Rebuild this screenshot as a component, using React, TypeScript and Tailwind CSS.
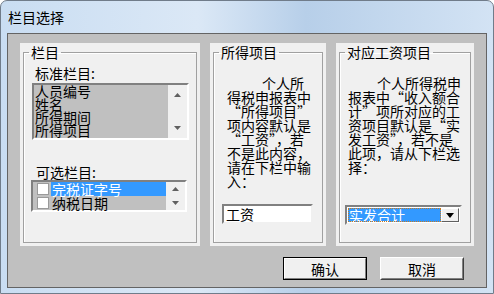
import React from 'react';

function Arrow({ dir }: { dir: 'up' | 'down' }) {
  return (
    <svg width="7" height="4" viewBox="0 0 7 4">
      {dir === 'up' ? <path d="M0 4 L3.5 0 L7 4 Z" fill="#606060" /> : <path d="M0 0 L3.5 4 L7 0 Z" fill="#606060" />}
    </svg>
  );
}

function Group({ title, width, children }: { title: string; width: string; children: React.ReactNode }) {
  return (
    <div className={`${width} h-[203px] bg-[#f0f0f0] px-[3px] pt-[2px] pb-[3px]`}>
      <fieldset className="h-[198px] border border-[#a0a0a0] shadow-[inset_1px_1px_0_#ffffff]">
        <legend className="ml-[5px] px-[2px] text-[14px] leading-[14px]">{title}</legend>
        {children}
      </fieldset>
    </div>
  );
}

const midLines = ['个人所', '得税申报表中', '“所得项目”', '项内容默认是', '“工资”，若', '不是此内容，', '请在下栏中输', '入：'];
const rightLines = ['个人所得税申', '报表中“收入额合', '计”项所对应的工', '资项目默认是“实', '发工资”，若不是', '此项，请从下栏选', '择：'];

export default function App() {
  return (
    <div className="w-[494px] h-[294px] rounded-t-[7px] border border-[#707c8a] bg-[linear-gradient(90deg,#c9ddf2_0%,#dbe8f6_40%,#b7cfe9_62%,#d3e3f4_100%)] font-['Noto_Sans_CJK_SC',sans-serif] text-black overflow-hidden">
      {/* Title bar */}
      <div className="h-[32px] flex items-center pl-[7px] text-[14px] leading-[14px]">栏目选择</div>

      {/* Client area */}
      <div className="ml-[6px] w-[480px] h-[255px] border border-[#646464] bg-[#c0c0c0] pt-[9px] px-[12px]">
        <div className="flex gap-[10px]">
          <Group title="栏目" width="w-[180px]">
            <div className="ml-[11px] mt-[7px] text-[14px] leading-[14px]">标准栏目:</div>
            <div className="ml-[8px] mt-[3px] w-[157px] h-[57px] border-2 border-t-[#808080] border-l-[#808080] border-r-[#ffffff] border-b-[#ffffff] flex bg-[#c0c0c0]">
              <div className="flex-1 pl-[1px] text-[14px] leading-[13px] overflow-hidden whitespace-nowrap">
                <div>人员编号</div>
                <div>姓名</div>
                <div>所得期间</div>
                <div>所得项目</div>
              </div>
              <div className="w-[19px] bg-[#f0f0f0] flex flex-col items-center justify-between py-[8px]">
                <Arrow dir="up" />
                <Arrow dir="down" />
              </div>
            </div>

            <div className="ml-[12px] mt-[25px] text-[14px] leading-[14px]">可选栏目:</div>
            <div className="ml-[7px] mt-[1px] w-[156px] h-[32px] border-2 border-t-[#808080] border-l-[#808080] border-r-[#ffffff] border-b-[#ffffff] flex bg-[#c0c0c0]">
              <div className="flex-1 text-[14px] leading-[14px] whitespace-nowrap">
                <div className="flex items-center h-[14px]">
                  <div className="ml-[4px] w-[12px] h-[12px] bg-white border border-[#9a9a9a]" />
                  <div className="ml-[2px] flex-1 h-[14px] bg-[#3399ff] text-white pl-[1px]">完税证字号</div>
                </div>
                <div className="flex items-center h-[14px]">
                  <div className="ml-[4px] w-[12px] h-[12px] bg-white border border-[#9a9a9a]" />
                  <div className="ml-[2px] pl-[1px]">纳税日期</div>
                </div>
              </div>
              <div className="w-[19px] bg-[#f0f0f0] flex flex-col items-center justify-between py-[5px]">
                <Arrow dir="up" />
                <Arrow dir="down" />
              </div>
            </div>
          </Group>

          <Group title="所得项目" width="w-[116px]">
            <div className="ml-[13px] mt-[17px] text-[14px] leading-[14px] whitespace-nowrap">
              {midLines.map((l, i) => (
                <div key={i} className={i === 0 ? 'pl-[35px]' : ''}>{l}</div>
              ))}
            </div>
            <div className="ml-[8px] mt-[16px] w-[91px] h-[20px] border-2 border-t-[#808080] border-l-[#808080] border-r-[#f0f0f0] border-b-[#f0f0f0] bg-white pl-[2px] text-[14px] leading-[16px]">
              工资
            </div>
          </Group>

          <Group title="对应工资项目" width="w-[138px]">
            <div className="ml-[8px] mt-[17px] text-[14px] leading-[14px] whitespace-nowrap">
              {rightLines.map((l, i) => (
                <div key={i} className={i === 0 ? 'pl-[29px]' : ''}>{l}</div>
              ))}
            </div>
            <div className="ml-[5px] mt-[31px] w-[117px] h-[20px] border-2 border-t-[#808080] border-l-[#808080] border-r-[#f0f0f0] border-b-[#f0f0f0] bg-white flex p-[1px]">
              <div className="flex-1 bg-[#3399ff] text-white text-[14px] leading-[14px] pl-[1px] outline outline-1 outline-dotted outline-[#c87a20] -outline-offset-1">
                实发合计
              </div>
              <div className="w-[18px] border border-t-white border-l-white border-r-[#606060] border-b-[#606060] bg-[#f0f0f0] flex items-center justify-center">
                <svg width="8" height="5" viewBox="0 0 8 5">
                  <path d="M0 0 L4 5 L8 0 Z" fill="#000000" />
                </svg>
              </div>
            </div>
          </Group>
        </div>

        {/* Buttons */}
        <div className="flex justify-end gap-[13px] mt-[11px] pr-[10px]">
          <div className="w-[84px] h-[23px] border border-black">
            <div className="h-full border border-t-white border-l-white border-r-[#808080] border-b-[#808080] bg-[#f0f0f0] flex items-center justify-center text-[14px] leading-[14px]">
              确认
            </div>
          </div>
          <div className="w-[84px] h-[23px] border border-t-white border-l-white border-r-[#404040] border-b-[#404040]">
            <div className="h-full border border-t-[#f0f0f0] border-l-[#f0f0f0] border-r-[#808080] border-b-[#808080] bg-[#f0f0f0] flex items-center justify-center text-[14px] leading-[14px]">
              取消
            </div>
          </div>
        </div>
      </div>
    </div>
  );
}
